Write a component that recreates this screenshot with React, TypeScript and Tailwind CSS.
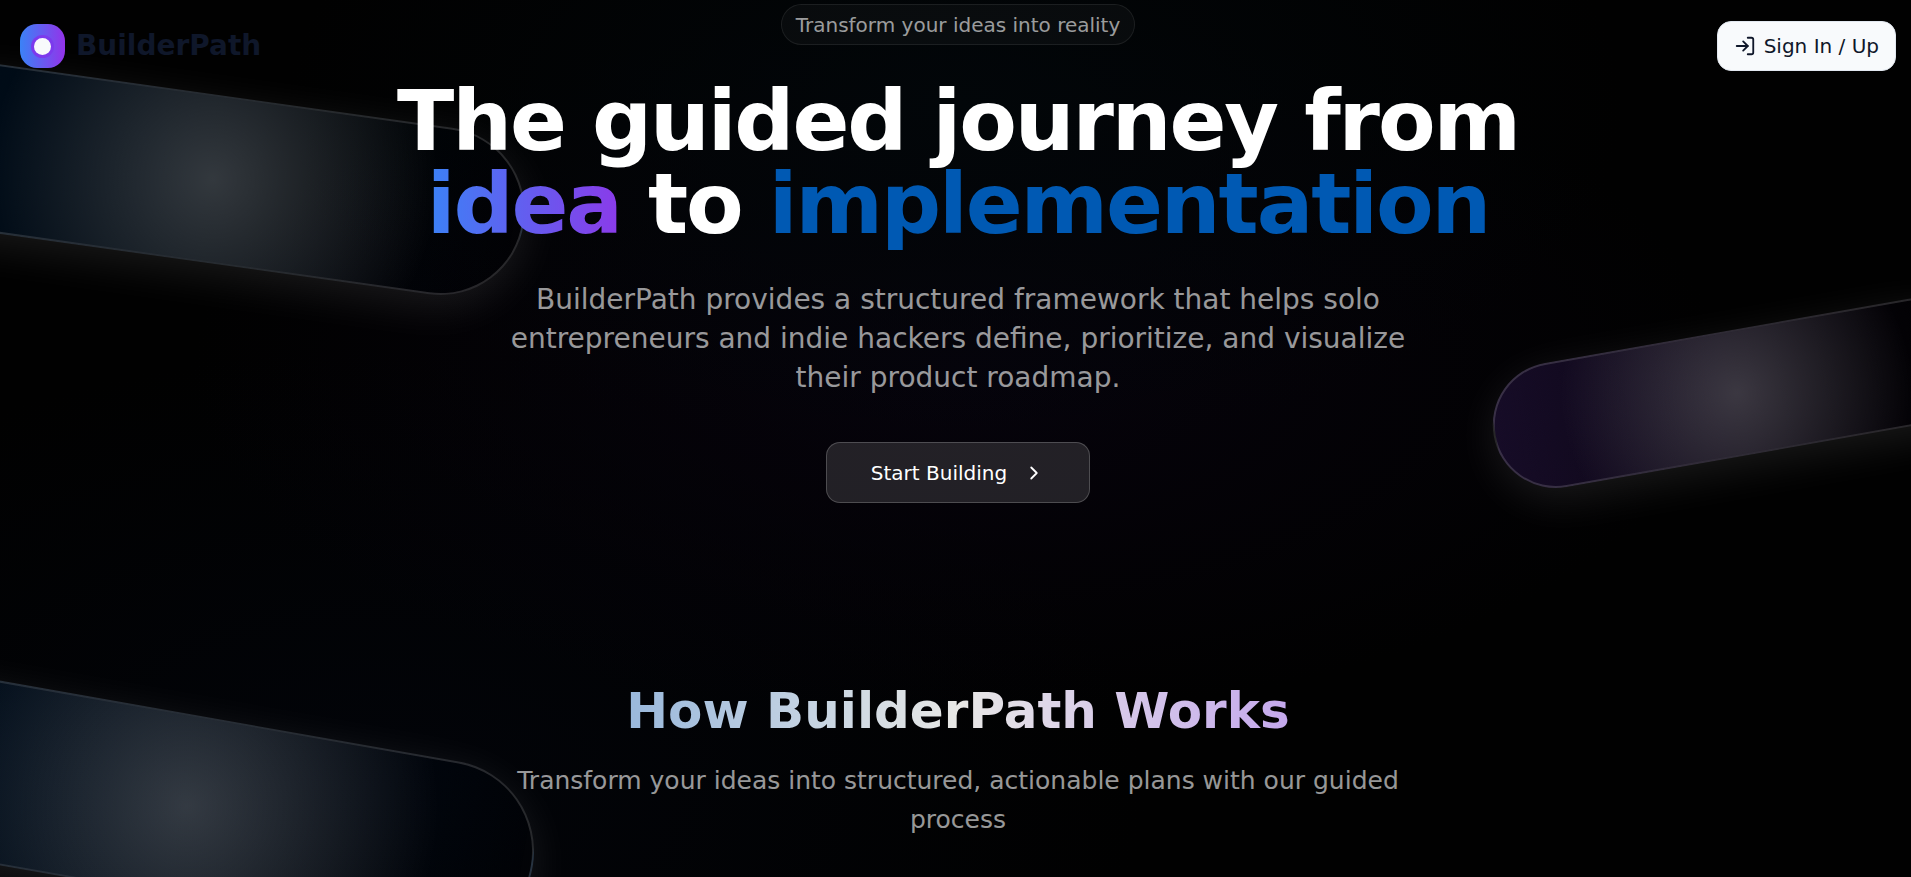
import React from "react";
import { ChevronRight, LogIn } from "lucide-react";

const glow =
  "after:absolute after:inset-0 after:rounded-full after:bg-[radial-gradient(circle_at_50%_50%,rgba(255,255,255,0.2),transparent_70%)]";

type ShapeProps = { className: string };

function Shape({ className }: ShapeProps) {
  return (
    <div
      aria-hidden="true"
      className={`pointer-events-none absolute rounded-full border-2 border-white/15 shadow-[0_11px_45px_0_rgba(255,255,255,0.1)] ${glow} ${className}`}
    />
  );
}

function Logo() {
  return (
    <a href="#" className="flex items-center gap-[11px]">
      <span className="flex h-11 w-[45px] items-center justify-center rounded-[17px] bg-linear-to-r/srgb from-[#3b82f6] to-[#9333ea]">
        <span className="flex size-[23px] items-center justify-center rounded-full bg-[#7c3aed]">
          <span className="size-[17px] rounded-full bg-[#f8fafc]" />
        </span>
      </span>
      <span className="text-[28px] leading-10 font-bold text-[#0f172a]">BuilderPath</span>
    </a>
  );
}

function Header() {
  return (
    <header className="absolute inset-x-0 top-0 z-20 flex items-center justify-between px-5 pt-[21px]">
      <Logo />
      <button
        type="button"
        className="flex h-[50px] items-center gap-2 rounded-[14px] border border-[#e2e8f0] bg-[#f8fafc] px-4 text-[20px] text-[#0f172a]"
      >
        <LogIn size={22} />
        Sign In / Up
      </button>
    </header>
  );
}

function Hero() {
  return (
    <section className="flex flex-col items-center pt-1 text-center">
      <p className="flex h-[41px] items-center rounded-full border border-white/8 bg-white/3 px-3.5 text-[20px] text-white/60">
        Transform your ideas into reality
      </p>
      <h1 className="mt-[35px] max-w-[1250px] text-[84px] leading-[83px] font-bold tracking-tight text-white">
        The guided journey from
        <br />
        <span className="bg-linear-to-r/srgb from-[#3b82f6] to-[#8b3ae9] bg-clip-text text-transparent">idea</span> to{" "}
        <span className="text-[#0059b3]">implementation</span>
      </h1>
      <p className="mt-[34px] max-w-[940px] text-[28px] leading-[39px] text-white/60">
        BuilderPath provides a structured framework that helps solo entrepreneurs and indie hackers define, prioritize,
        and visualize their product roadmap.
      </p>
      <button
        type="button"
        className="mt-[45px] flex h-[61px] items-center gap-4 rounded-[14px] border border-white/20 bg-white/12 px-11 text-[20px] text-white"
      >
        Start Building
        <ChevronRight size={22} />
      </button>
    </section>
  );
}

function HowItWorks() {
  return (
    <section className="flex flex-col items-center pt-[180px] pb-12 text-center">
      <h2 className="bg-linear-to-r/srgb from-[#99b8dc] via-[#e8e8e6] to-[#c4a8ec] bg-clip-text text-[50px] leading-14 font-bold text-transparent">
        How BuilderPath Works
      </h2>
      <p className="mt-[22px] max-w-[940px] text-[25px] leading-[39px] text-white/60">
        Transform your ideas into structured, actionable plans with our guided process
      </p>
    </section>
  );
}

export default function App() {
  return (
    <div className="relative h-screen overflow-hidden bg-[#010101] font-['DejaVu_Sans',sans-serif]">
      <div
        aria-hidden="true"
        className="absolute inset-0 bg-[radial-gradient(ellipse_35%_40%_at_50%_12%,#020609,transparent),radial-gradient(ellipse_40%_40%_at_50%_42%,#06030c,transparent),radial-gradient(ellipse_40%_50%_at_20%_90%,#020409,transparent)]"
      />
      <Shape className="top-[95px] -left-[101px] h-[168px] w-[628px] rotate-8 bg-linear-to-r/srgb from-[#0059b3]/15 to-transparent" />
      <Shape className="top-[330px] -right-[73px] h-[126px] w-[494px] -rotate-10 bg-linear-to-r/srgb from-[#8b4cf0]/15 to-transparent" />
      <Shape className="top-[715px] -left-[164px] h-[182px] w-[702px] rotate-10 bg-linear-to-r/srgb from-[#0059b3]/15 to-transparent" />
      <div className="relative -mr-[5px]">
        <Header />
        <main>
          <Hero />
          <HowItWorks />
        </main>
      </div>
    </div>
  );
}
